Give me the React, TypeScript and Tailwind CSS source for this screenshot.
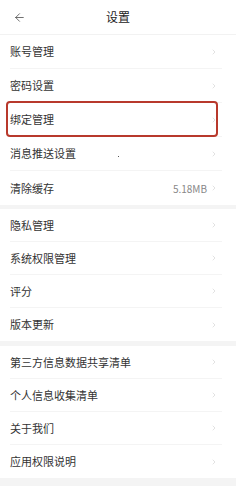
import { ChevronRight, ArrowLeft } from 'lucide-react';

type Row = { label: string; value?: string; mark?: boolean; h: string };

const GROUPS: Row[][] = [
  [
    { label: '账号管理', h: 'h-[34px]' },
    { label: '密码设置', h: 'h-[34px]' },
    { label: '绑定管理', h: 'h-[34px]', mark: true },
    { label: '消息推送设置', h: 'h-[34px]' },
    { label: '清除缓存', value: '5.18MB', h: 'h-[34px]' },
  ],
  [
    { label: '隐私管理', h: 'h-[33px]' },
    { label: '系统权限管理', h: 'h-[33px]' },
    { label: '评分', h: 'h-[33px]' },
    { label: '版本更新', h: 'h-[33px]' },
  ],
  [
    { label: '第三方信息数据共享清单', h: 'h-[33px]' },
    { label: '个人信息收集清单', h: 'h-[33px]' },
    { label: '关于我们', h: 'h-[33px]' },
    { label: '应用权限说明', h: 'h-[33px]' },
  ],
];

const GAPS = ['h-[4px]', 'h-[5px]'];

export default function App() {
  return (
    <div
      className="w-[236px] h-[486px] overflow-hidden bg-[#f4f4f4] text-[#333]"
      style={{ fontFamily: '"Noto Sans CJK SC", "Noto Sans", sans-serif' }}
    >
      {/* Header */}
      <div className="h-[35px] bg-white grid grid-cols-[40px_1fr_40px] items-center border-b border-[#f2f2f2]">
        <ArrowLeft size={13} strokeWidth={1.4} className="ml-[13px] text-[#444]" />
        <span className="text-center text-[12px] text-[#222]">设置</span>
        <span />
      </div>

      {GROUPS.map((g, gi) => (
        <div key={gi}>
          <div className="bg-white">
            {g.map((r, i) => (
              <div key={r.label} className={`relative ${r.h} pl-[10px] pr-[14px]`}>
                <div
                  className={`h-full flex items-center pr-[4px] ${
                    i < g.length - 1 ? 'border-b border-[#f4f4f4]' : ''
                  }`}
                >
                  <span className="flex-1 text-[11px] leading-none text-[#333]">{r.label}</span>
                  {r.value && <span className="text-[10px] text-[#888] mr-[3px]">{r.value}</span>}
                  <ChevronRight size={8} strokeWidth={1.5} className="text-[#c4c4c4]" />
                </div>
                {r.mark && (
                  <div className="absolute left-[6px] right-[18px] top-[-2px] bottom-0 border-2 border-[#b8392c] rounded-[4px]" />
                )}
                {r.label === '消息推送设置' && (
                  <div className="absolute left-[118px] top-[19px] w-px h-px bg-[#555]" />
                )}
              </div>
            ))}
          </div>
          {gi < GAPS.length && <div className={GAPS[gi]} />}
        </div>
      ))}
    </div>
  );
}
